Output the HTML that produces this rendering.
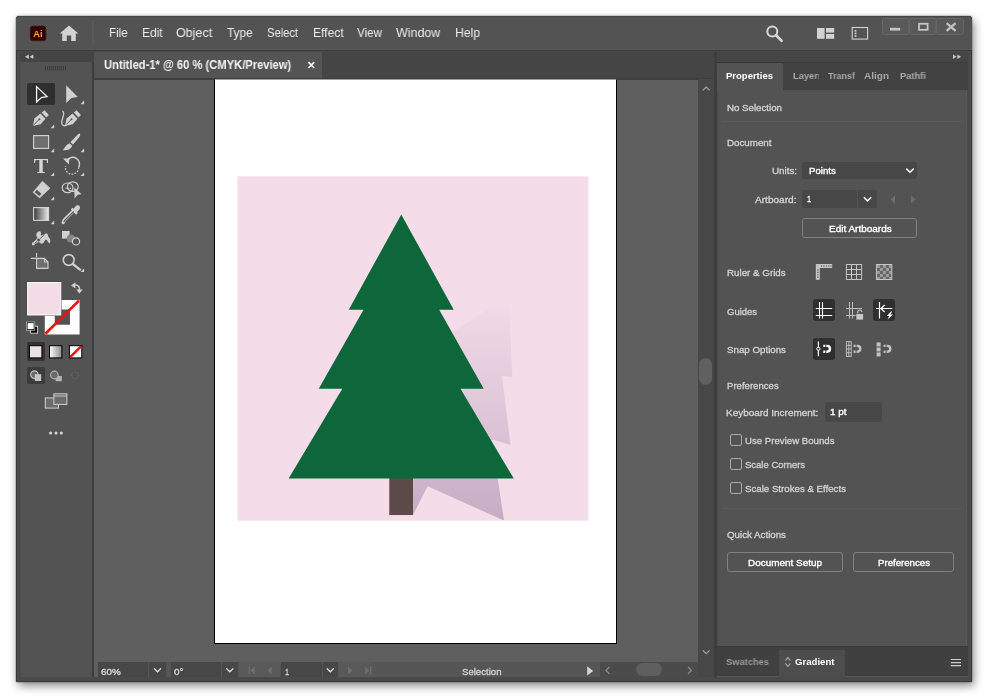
<!DOCTYPE html>
<html><head><meta charset="utf-8"><title>Illustrator</title>
<style>
*{box-sizing:border-box;margin:0;padding:0}
html,body{width:988px;height:698px;background:#fff;overflow:hidden}
body{font-family:"Liberation Sans","DejaVu Sans",sans-serif;position:relative}
.b{position:absolute}
.t{position:absolute;white-space:nowrap;line-height:1;transform-origin:0 0;display:block;will-change:transform}
.w{-webkit-text-stroke:0.35px #fff}
.p{-webkit-text-stroke:0.3px #d4d4d4}
#win{left:16px;top:16px;width:956px;height:666px;background:#4a4a4a;border:1px solid #3a3a3a;border-radius:3px 3px 0 0;box-shadow:2px 4px 10px rgba(0,0,0,.45),0 0 2px rgba(0,0,0,.55)}
#menubar{left:16px;top:16px;width:956px;height:34px;background:#535353;border-radius:3px 3px 0 0;border-top:1px solid #464646;border-bottom:1px solid #575757}
.fld{background:#474747;border-radius:2px}
.btn{border:1px solid #808080;border-radius:3px}
.cb{border:1px solid #a8a8a8;border-radius:2px;width:12px;height:12px}
.dk{background:#2f2f2f;border-radius:3px}
</style></head><body>
<div class="b" id="win"></div>
<div class="b" id="menubar"></div>
<!-- tools -->
<div class="b" style="left:17px;top:50px;width:954px;height:1.4px;background:#3a3a3a"></div>
<div class="b" style="left:20px;top:51.6px;width:74px;height:10.6px;background:#444"></div>
<div class="b" style="left:91.5px;top:62px;width:2.5px;height:615px;background:#3d3d3d"></div>
<div class="b" style="left:714px;top:51.6px;width:3px;height:626px;background:#3d3d3d"></div>
<div class="b" style="left:20px;top:62px;width:71.5px;height:615px;background:#535353;border-left:1px solid #4c4c4c"></div>
<!-- doc area -->
<div class="b" style="left:94px;top:51.6px;width:620px;height:27px;background:#454545"></div>
<div class="b" style="left:94px;top:51.8px;width:228px;height:25.8px;background:#545454"></div>
<div class="b" style="left:94px;top:77.5px;width:620px;height:2.1px;background:#3f3f3f"></div>
<div class="b" style="left:94px;top:79.6px;width:604px;height:582.4px;background:#5f5f5f"></div>
<div class="b" style="left:698px;top:79px;width:16px;height:583px;background:#474747"></div>
<div class="b" style="left:699px;top:358px;width:13px;height:27px;background:#606060;border-radius:7px"></div>
<!-- status -->
<div class="b" style="left:94px;top:662px;width:620px;height:15.4px;background:#565656"></div>
<div class="b" style="left:94px;top:662px;width:4px;height:15px;background:#5f5f5f"></div>
<div class="b" style="left:698px;top:662px;width:16px;height:15px;background:#474747"></div>
<div class="b fld" style="left:98px;top:662px;width:50px;height:15px;border-radius:0"></div>
<div class="b fld" style="left:149px;top:662px;width:17px;height:15px;border-radius:0"></div>
<div class="b fld" style="left:171px;top:662px;width:50px;height:15px;border-radius:0"></div>
<div class="b fld" style="left:222px;top:662px;width:16px;height:15px;border-radius:0"></div>
<div class="b fld" style="left:281px;top:662px;width:41px;height:15px;border-radius:0"></div>
<div class="b fld" style="left:323px;top:662px;width:15px;height:15px;border-radius:0"></div>
<div class="b" style="left:239px;top:662px;width:41px;height:15px;background:#595959"></div>
<div class="b" style="left:339px;top:662px;width:34px;height:15px;background:#595959"></div>
<div class="b" style="left:600px;top:662px;width:98px;height:15px;background:#4b4b4b"></div>
<div class="b" style="left:636px;top:663px;width:25.5px;height:13.4px;background:#5f5f5f;border-radius:7px"></div>
<!-- right panel -->
<div class="b" style="left:717px;top:51.6px;width:251px;height:10.6px;background:#454545"></div>
<div class="b" style="left:717px;top:62px;width:251px;height:27.7px;background:#424242;border-top:1px solid #3c3c3c"></div>
<div class="b" style="left:717px;top:62px;width:66px;height:27.7px;background:#535353;border-top:1px solid #353535"></div>
<div class="b" style="left:717px;top:89.7px;width:251px;height:556.3px;background:#535353;border-left:1px solid #4b4b4b;border-right:2px solid #4b4b4b"></div>
<div class="b" style="left:965.6px;top:89.7px;width:0.8px;height:556.3px;background:#5a5a5a"></div>
<div class="b" style="left:717px;top:646px;width:251px;height:31px;background:#404040;border-top:1px solid #3a3a3a;border-bottom:1px solid #575757"></div>
<div class="b" style="left:779px;top:650px;width:66px;height:27px;background:#4d4d4d"></div>
<!-- separators -->
<div class="b" style="left:722px;top:121px;width:240px;height:1px;background:#5a5a5a"></div>
<div class="b" style="left:722px;top:508px;width:240px;height:1px;background:#5a5a5a"></div>
<!-- fields -->
<div class="b fld" style="left:802px;top:162px;width:115px;height:17px"></div>
<div class="b fld" style="left:802px;top:190px;width:55px;height:18px;border-radius:2px 0 0 2px"></div>
<div class="b fld" style="left:858px;top:190px;width:19px;height:18px;border-radius:0 2px 2px 0"></div>
<div class="b btn" style="left:802px;top:218px;width:115px;height:20px"></div>
<div class="b dk" style="left:813px;top:299px;width:22px;height:22px"></div>
<div class="b dk" style="left:873px;top:299px;width:22px;height:22px"></div>
<div class="b dk" style="left:813px;top:338px;width:22px;height:22px"></div>
<div class="b fld" style="left:825px;top:402px;width:57px;height:20px"></div>
<div class="b cb" style="left:730px;top:434px"></div>
<div class="b cb" style="left:730px;top:458px"></div>
<div class="b cb" style="left:730px;top:482px"></div>
<div class="b btn" style="left:727px;top:552px;width:116px;height:20px"></div>
<div class="b btn" style="left:853px;top:552px;width:101px;height:20px"></div>
<!-- tool active bg -->
<div class="b dk" style="left:27px;top:83px;width:28px;height:22px;border-radius:2px"></div>
<div class="b dk" style="left:27px;top:342px;width:18px;height:19px;border-radius:2px;background:#333"></div>
<div class="b dk" style="left:27px;top:367px;width:18px;height:17px;border-radius:2px;background:#3b3b3b"></div>
<span class="t" style="left:108.90px;top:26px;font-size:13px;color:#ececec;transform:scaleX(0.8877);">File</span>
<span class="t" style="left:141.90px;top:26px;font-size:13px;color:#ececec;transform:scaleX(0.9194);">Edit</span>
<span class="t" style="left:176.40px;top:26px;font-size:13px;color:#ececec;transform:scaleX(0.9607);">Object</span>
<span class="t" style="left:226.90px;top:26px;font-size:13px;color:#ececec;transform:scaleX(0.9082);">Type</span>
<span class="t" style="left:266.90px;top:26px;font-size:13px;color:#ececec;transform:scaleX(0.8605);">Select</span>
<span class="t" style="left:312.65px;top:26px;font-size:13px;color:#ececec;transform:scaleX(0.9268);">Effect</span>
<span class="t" style="left:357.40px;top:26px;font-size:13px;color:#ececec;transform:scaleX(0.8979);">View</span>
<span class="t" style="left:396.40px;top:26px;font-size:13px;color:#ececec;transform:scaleX(0.9589);">Window</span>
<span class="t" style="left:454.90px;top:26px;font-size:13px;color:#ececec;transform:scaleX(0.9383);">Help</span>
<span class="t" style="left:103.60px;top:59px;font-size:12px;color:#f4f4f4;transform:scaleX(0.9310);font-weight:bold;">Untitled-1* @ 60 % (CMYK/Preview)</span>
<span class="t" style="left:726.40px;top:71px;font-size:9.5px;color:#ffffff;transform:scaleX(1.0000);font-weight:bold;">Properties</span>
<span class="t" style="left:792.50px;top:71px;font-size:9.5px;color:#a9a9a9;transform:scaleX(0.9791);font-weight:bold;width:26.86px;overflow:hidden">Layers</span>
<span class="t" style="left:828.00px;top:71px;font-size:9.5px;color:#a9a9a9;transform:scaleX(0.9469);font-weight:bold;width:28.51px;overflow:hidden">Transform</span>
<span class="t" style="left:864.00px;top:71px;font-size:9.5px;color:#a9a9a9;transform:scaleX(1.0526);font-weight:bold;">Align</span>
<span class="t" style="left:900.00px;top:71px;font-size:9.5px;color:#a9a9a9;transform:scaleX(0.9790);font-weight:bold;width:27.17px;overflow:hidden">Pathfinder</span>
<span class="t p" style="left:727.00px;top:103px;font-size:9.5px;color:#d4d4d4;transform:scaleX(1.0209);">No Selection</span>
<span class="t p" style="left:727.00px;top:138px;font-size:9.5px;color:#d4d4d4;transform:scaleX(1.0274);">Document</span>
<span class="t p" style="left:771.50px;top:166px;font-size:9.5px;color:#d4d4d4;transform:scaleX(1.0289);">Units:</span>
<span class="t w" style="left:809.00px;top:166px;font-size:9.5px;color:#ffffff;transform:scaleX(1.0111);">Points</span>
<span class="t p" style="left:755.00px;top:195px;font-size:9.5px;color:#d4d4d4;transform:scaleX(1.0620);">Artboard:</span>
<span class="t w" style="left:806.50px;top:194px;font-size:9.5px;color:#ffffff;transform:scaleX(0.7552);">1</span>
<span class="t w" style="left:828.50px;top:224px;font-size:9.5px;color:#ffffff;transform:scaleX(1.0507);">Edit Artboards</span>
<span class="t p" style="left:727.00px;top:268px;font-size:9.5px;color:#d4d4d4;transform:scaleX(1.0295);">Ruler &amp; Grids</span>
<span class="t p" style="left:727.00px;top:307px;font-size:9.5px;color:#d4d4d4;transform:scaleX(0.9964);">Guides</span>
<span class="t p" style="left:727.00px;top:345px;font-size:9.5px;color:#d4d4d4;transform:scaleX(1.0247);">Snap Options</span>
<span class="t p" style="left:727.00px;top:381px;font-size:9.5px;color:#d4d4d4;transform:scaleX(1.0091);">Preferences</span>
<span class="t p" style="left:725.70px;top:408px;font-size:9.5px;color:#d4d4d4;transform:scaleX(1.0466);">Keyboard Increment:</span>
<span class="t w" style="left:829.50px;top:407px;font-size:9.5px;color:#ffffff;transform:scaleX(1.0404);">1 pt</span>
<span class="t p" style="left:745.00px;top:436px;font-size:9.5px;color:#d4d4d4;transform:scaleX(1.0149);">Use Preview Bounds</span>
<span class="t p" style="left:745.00px;top:460px;font-size:9.5px;color:#d4d4d4;transform:scaleX(0.9966);">Scale Corners</span>
<span class="t p" style="left:745.00px;top:484px;font-size:9.5px;color:#d4d4d4;transform:scaleX(1.0192);">Scale Strokes &amp; Effects</span>
<span class="t p" style="left:727.00px;top:530px;font-size:9.5px;color:#d4d4d4;transform:scaleX(1.0250);">Quick Actions</span>
<span class="t w" style="left:748.00px;top:558px;font-size:9.5px;color:#ffffff;transform:scaleX(1.0457);">Document Setup</span>
<span class="t w" style="left:877.50px;top:558px;font-size:9.5px;color:#ffffff;transform:scaleX(1.0149);">Preferences</span>
<span class="t" style="left:726.00px;top:657px;font-size:9.5px;color:#9a9a9a;transform:scaleX(0.9811);font-weight:bold;">Swatches</span>
<span class="t" style="left:795.00px;top:657px;font-size:9.5px;color:#ffffff;transform:scaleX(1.0112);font-weight:bold;">Gradient</span>
<span class="t p" style="left:101.00px;top:667px;font-size:9.5px;color:#e8e8e8;transform:scaleX(1.0412);">60%</span>
<span class="t p" style="left:174.00px;top:667px;font-size:9.5px;color:#e8e8e8;transform:scaleX(1.0447);">0°</span>
<span class="t p" style="left:284.50px;top:667px;font-size:9.5px;color:#e8e8e8;transform:scaleX(0.7552);">1</span>
<span class="t p" style="left:461.50px;top:667px;font-size:9.5px;color:#d4d4d4;transform:scaleX(1.0104);">Selection</span>
<svg class="b" style="left:0;top:0" width="988" height="698" viewBox="0 0 988 698">
<defs>
<linearGradient id="sh" x1="0" y1="300" x2="0" y2="520" gradientUnits="userSpaceOnUse">
<stop offset="0" stop-color="#5a3c70" stop-opacity="0.0"/>
<stop offset="0.1" stop-color="#5a3c70" stop-opacity="0.04"/>
<stop offset="0.35" stop-color="#5a3c70" stop-opacity="0.10"/>
<stop offset="0.66" stop-color="#5a3c70" stop-opacity="0.175"/>
<stop offset="0.82" stop-color="#5a3c70" stop-opacity="0.25"/>
<stop offset="1" stop-color="#5a3c70" stop-opacity="0.30"/>
</linearGradient>
<linearGradient id="gr" x1="0" x2="1" y1="0" y2="0"><stop offset="0" stop-color="#3a3a3a"/><stop offset="1" stop-color="#ececec"/></linearGradient>
<linearGradient id="gr2" x1="0" x2="1" y1="0" y2="0"><stop offset="0" stop-color="#ffffff"/><stop offset="1" stop-color="#8a8a8a"/></linearGradient>
<clipPath id="cv"><rect x="94" y="79.6" width="604" height="582.4"/></clipPath>
<pattern id="chk" x="876.9" y="265" width="6" height="6" patternUnits="userSpaceOnUse"><rect width="6" height="6" fill="#666"/><rect width="3" height="3" fill="#9c9c9c"/><rect x="3" y="3" width="3" height="3" fill="#9c9c9c"/></pattern>
<path id="tri" d="M3.6,0 L3.6,3.6 L0,3.6 Z" fill="#cfcfcf"/>
<path id="mag" d="M0,0 H3.8 A2.9,2.9 0 0 1 3.8,5.8 H0" fill="none" stroke-width="2.4"/>
</defs>
<!-- artboard -->
<g clip-path="url(#cv)">
<rect x="214.5" y="70.5" width="402" height="573" fill="#fff" stroke="#000" stroke-width="1"/>
<rect x="237.5" y="176.3" width="351" height="344.3" fill="#f4dde9"/>
<path d="M502,300 L509,306 L512.3,377 L502,376 L510.5,445 L494,440 L440,440 L440,340 Z" fill="url(#sh)"/>
<path d="M413,478 L497.7,478 L504,520.6 L427.6,486.2 L413,515 Z" fill="url(#sh)"/>
<rect x="389.3" y="478" width="23.7" height="37" fill="#5b4a47"/>
<path d="M401.25,214.5 L453.75,309.7 L439.2,309.7 L483.75,388.7 L460.5,388.7 L513.8,478.6 L288.6,478.6 L342.3,388.7 L318.75,388.7 L363.5,309.7 L348.75,309.7 Z" fill="#0d673b"/>
</g>

<!-- ===== menubar ===== -->
<rect x="30.3" y="26" width="15.6" height="14.8" rx="2.6" fill="#330000" stroke="#4a1a10" stroke-width=".6"/>
<text x="38" y="37.3" font-family="'Liberation Sans',sans-serif" font-weight="bold" font-size="9.3" fill="#ffa51f" text-anchor="middle">Ai</text>
<path d="M69,25.5 L78.3,33.6 H75.8 V41 H71.2 V35.6 H66.8 V41 H62.2 V33.6 H59.7 Z" fill="#d2d2d2"/>
<rect x="92.4" y="22" width="1" height="22" fill="#5f5f5f"/>
<circle cx="772.3" cy="31.4" r="5" fill="none" stroke="#d8d8d8" stroke-width="2"/>
<path d="M776,35.3 L781.6,40.8" stroke="#d8d8d8" stroke-width="2.6" stroke-linecap="round"/>
<g fill="#d2d2d2"><rect x="817" y="28" width="7.6" height="10.8"/><rect x="826" y="28" width="8.2" height="4.6"/><rect x="826" y="34" width="8.2" height="4.8"/></g>
<rect x="852.2" y="27.5" width="15.4" height="11.6" fill="none" stroke="#d2d2d2" stroke-width="1.1"/>
<g fill="#d2d2d2"><rect x="854.6" y="30" width="1.8" height="1.6"/><rect x="854.6" y="32.6" width="1.8" height="1.6"/><rect x="854.6" y="35.2" width="1.8" height="1.6"/></g>
<!-- window controls -->
<g fill="#595959" stroke="#676767" stroke-width="1">
<rect x="882.5" y="18.5" width="26.5" height="16" rx="2"/><rect x="909.5" y="18.5" width="26.5" height="16" rx="2"/><rect x="936.5" y="18.5" width="27" height="16" rx="2"/>
</g>
<rect x="890" y="27.8" width="10.2" height="2.8" fill="#c4c4c4"/>
<rect x="919" y="23.8" width="8.6" height="6" fill="none" stroke="#c4c4c4" stroke-width="1.8"/>
<path d="M946.6,23.2 L955.6,30.8 M955.6,23.2 L946.6,30.8" stroke="#c4c4c4" stroke-width="2.2"/>

<!-- doc tab close -->
<path d="M308.4,62.2 L314.2,68 M314.2,62.2 L308.4,68" stroke="#f4f4f4" stroke-width="1.7"/>
<!-- scroll chevrons -->
<g fill="none" stroke="#a4a4a4" stroke-width="1.3">
<path d="M702.8,90.4 L706.2,87.1 L709.6,90.4"/>
<path d="M702.8,650.4 L706.2,653.7 L709.6,650.4"/>
<path d="M609.4,667 L606,670.4 L609.4,673.8" stroke="#8e8e8e" stroke-width="1.2"/>
<path d="M688,667 L691.4,670.4 L688,673.8" stroke="#8e8e8e" stroke-width="1.2"/>
</g>
<!-- status bar -->
<g fill="none" stroke="#e6e6e6" stroke-width="1.3">
<path d="M154,668.4 L157.5,671.8 L161,668.4"/>
<path d="M226.3,668.4 L229.8,671.8 L233.3,668.4"/>
<path d="M326.8,668.4 L330.3,671.8 L333.8,668.4"/>
</g>
<g fill="#6f6f6f">
<rect x="248.6" y="666.5" width="1.2" height="8"/><path d="M254.6,666.5 V674.5 L250.4,670.5 Z"/>
<path d="M271.6,666.5 V674.5 L267.4,670.5 Z"/>
<path d="M348,666.5 V674.5 L352.2,670.5 Z"/>
<path d="M365.2,666.5 V674.5 L369.4,670.5 Z"/><rect x="370" y="666.5" width="1.2" height="8"/>
</g>
<path d="M587.2,666.3 V675.5 L593.2,670.9 Z" fill="#d6d6d6"/>

<!-- ===== tools ===== -->
<g fill="#c8c8c8"><path d="M28.8,54.4 V59 L25,56.7 Z"/><path d="M33.4,54.4 V59 L29.6,56.7 Z"/></g>
<g fill="#3b3b3b">
<rect x="45" y="66" width="1" height="4.4"/><rect x="47" y="66" width="1" height="4.4"/><rect x="49" y="66" width="1" height="4.4"/><rect x="51" y="66" width="1" height="4.4"/><rect x="53" y="66" width="1" height="4.4"/><rect x="55" y="66" width="1" height="4.4"/><rect x="57" y="66" width="1" height="4.4"/><rect x="59" y="66" width="1" height="4.4"/><rect x="61" y="66" width="1" height="4.4"/><rect x="63" y="66" width="1" height="4.4"/><rect x="65" y="66" width="1" height="4.4"/>
</g>
<!-- selection -->
<path d="M36.6,86.6 L47,96.6 L41.4,97.6 L36.6,102 Z" fill="none" stroke="#f4f4f4" stroke-width="1.3" stroke-linejoin="miter"/>
<path d="M66.2,85.2 L77.8,96.9 L71.4,98 L66.2,103 Z" fill="#cfcfcf"/>
<use href="#tri" x="80.5" y="100.6"/>
<!-- pen -->
<g transform="translate(32.5,110)" fill="#d0d0d0">
<path d="M9.2,2.6 L11.9,0.2 L16.4,5.1 L13.8,7.6 Z"/>
<path d="M7.9,3.6 L12.9,8.7 L8.2,14.3 L0.4,15.9 L1.9,8.6 Z"/>
<path d="M0.6,15.7 L6.4,9.7" stroke="#535353" stroke-width="0.9"/><circle cx="6.9" cy="9.2" r="1" fill="#535353"/>
</g>
<use href="#tri" x="50.6" y="124.6"/>
<!-- curvature -->
<g transform="translate(64.6,110)" fill="#d0d0d0">
<path d="M9.2,2.6 L11.9,0.2 L16.4,5.1 L13.8,7.6 Z"/>
<path d="M7.9,3.6 L12.9,8.7 L8.2,14.3 L0.4,15.9 L1.9,8.6 Z"/>
<path d="M0.6,15.7 L6.4,9.7" stroke="#535353" stroke-width="0.9"/><circle cx="6.9" cy="9.2" r="1" fill="#535353"/>
</g>
<path d="M62.4,111 C66.5,113.5 60.5,119.5 61.8,123.6 C62.6,126.4 65.6,126.3 66.6,124.4" fill="none" stroke="#d0d0d0" stroke-width="1.3"/>
<!-- rectangle -->
<rect x="33.6" y="135.6" width="15" height="12.8" fill="#6f6f6f" stroke="#d6d6d6" stroke-width="1.1"/>
<use href="#tri" x="50.6" y="148.6"/>
<!-- brush -->
<g fill="#d0d0d0">
<path d="M79.9,133.6 C80.6,135 80,136.4 79,137.6 L73,144.6 L70.4,142.2 L76.8,135.4 C77.8,134.3 78.8,133.7 79.9,133.6 Z"/>
<path d="M69.6,143.2 L72.2,145.7 C71.4,149.4 66.4,150.8 62.4,150.2 C65.2,148.4 65.4,144.6 69.6,143.2 Z"/>
</g>
<use href="#tri" x="80.5" y="148.6"/>
<!-- type -->
<text x="41" y="172.9" font-family="'Liberation Serif',serif" font-weight="bold" font-size="20.5" fill="#d6d6d6" text-anchor="middle" textLength="14.6" lengthAdjust="spacingAndGlyphs">T</text>
<use href="#tri" x="50.6" y="172.4"/>
<!-- rotate -->
<path d="M67.2,160.6 A6.6,6.6 0 0 1 78.6,167.4" fill="none" stroke="#d0d0d0" stroke-width="1.5"/>
<path d="M78.6,167.4 A6.6,6.6 0 1 1 65.6,166" fill="none" stroke="#d0d0d0" stroke-width="1.3" stroke-dasharray="1.6 1.5"/>
<path d="M63,158.4 L69.4,158.6 L68.8,164.4 Z" fill="#d0d0d0"/>
<use href="#tri" x="80.5" y="172.4"/>
<!-- eraser -->
<path d="M42.4,181.2 L50.1,188.2 L39.6,197.9 L33,192.3 Z" fill="#d0d0d0" stroke="#d0d0d0" stroke-width=".6" stroke-linejoin="round"/>
<path d="M34.7,192.2 L36.8,189.7 L41.4,193.7 L39.4,196.1 Z" fill="#535353"/>
<use href="#tri" x="50.6" y="196.6"/>
<!-- shape builder -->
<ellipse cx="67.6" cy="187.8" rx="5.4" ry="4.8" fill="none" stroke="#d0d0d0" stroke-width="1.2"/>
<ellipse cx="72.8" cy="186.6" rx="5.4" ry="4.8" fill="none" stroke="#d0d0d0" stroke-width="1.2"/>
<g fill="#d0d0d0"><circle cx="66" cy="188.2" r=".7"/><circle cx="68.2" cy="188.2" r=".7"/><circle cx="70.4" cy="188.2" r=".7"/></g>
<path d="M74.2,187.6 L81.6,194.2 L77.6,194.8 L74.6,198.6 Z" fill="#d0d0d0"/>
<!-- gradient -->
<rect x="33.6" y="207.6" width="15" height="12.8" fill="url(#gr)" stroke="#d6d6d6" stroke-width="1.1"/>
<use href="#tri" x="50.6" y="220.6"/>
<!-- eyedropper -->
<path d="M76.4,205.6 C78.8,204.6 80.8,206.6 79.8,209 L77,212 L77.9,213 L76.2,214.8 L70.8,209.4 L72.4,207.8 L73.4,208.7 Z" fill="#d0d0d0"/>
<path d="M73,211.4 L64.4,220 L63.2,222.4" fill="none" stroke="#d0d0d0" stroke-width="3.4" stroke-linecap="round" stroke-linejoin="round"/>
<path d="M73.4,211.8 L65,220.2 L64,221.6" fill="none" stroke="#535353" stroke-width="1.2" stroke-linecap="round"/>
<!-- puppet/warp -->
<path d="M33,243.6 C33.6,240 36.6,240.6 37.4,237.4 C35.6,235.6 36.2,232 38.8,231.4 C40.8,231 41.6,233.4 40.6,235 C42.6,236.6 44.4,233 46.6,233.6 C48.6,234.2 47.6,237 49.6,238.2 C50.6,240 50.4,242.8 49.4,243.6 C47.8,242.6 47.6,240 46,239.6 C44.4,239.8 44.6,243 42.4,243.6 C40.4,244 39.8,241.8 38.4,242 C36.4,242.6 35.6,245 33,243.6 Z" fill="#d0d0d0"/>
<path d="M33.4,244.6 L44.6,234.6" stroke="#535353" stroke-width=".9"/><circle cx="38.6" cy="240" r="1.9" fill="#535353" stroke="#d0d0d0" stroke-width=".8"/>
<rect x="32" y="242.6" width="2.6" height="2.6" fill="#d0d0d0"/>
<!-- blend -->
<rect x="62" y="231" width="7.6" height="7.6" fill="#d0d0d0"/>
<circle cx="70.8" cy="238.6" r="4" fill="#858585"/>
<circle cx="76" cy="241.4" r="3.6" fill="#535353" stroke="#d6d6d6" stroke-width="1.2"/>
<!-- artboard -->
<path d="M36.6,258.4 H44.4 L48,262 V268.4 H36.6 Z" fill="#6f6f6f" stroke="#d0d0d0" stroke-width="1.1"/>
<path d="M44.4,258.4 V262 H48" fill="none" stroke="#d0d0d0" stroke-width="1"/>
<path d="M36.6,253 V257.6 M30.8,258.4 H35.8" stroke="#d0d0d0" stroke-width="1.1"/>
<!-- zoom -->
<circle cx="68.7" cy="260" r="5.4" fill="none" stroke="#d0d0d0" stroke-width="1.6"/>
<path d="M72.8,264 L80,269.6" stroke="#d0d0d0" stroke-width="2.4" stroke-linecap="round"/>
<use href="#tri" x="80.5" y="268.4"/>
<!-- stroke swatch -->
<path d="M44.8,300 H79.6 V334.4 H44.8 Z M54.8,309.4 V324.8 H70 V309.4 Z" fill="#fff" fill-rule="evenodd"/>
<path d="M45.4,333.8 L79,300.6" stroke="#ee1111" stroke-width="2.7"/>
<!-- fill swatch -->
<rect x="26.8" y="281.7" width="34.8" height="34.1" fill="#3c3c3c"/>
<rect x="27.6" y="282.5" width="33.2" height="32.5" fill="#f5dde8" stroke="#fff" stroke-width="1"/>
<!-- swap -->
<path d="M74.4,285.2 C78.6,284.6 80,287.6 79.4,290.4" fill="none" stroke="#d0d0d0" stroke-width="1.5"/>
<path d="M71,285.6 L75.4,282.2 V288.6 Z M76.2,289.4 H82.8 L79.4,293.4 Z" fill="#d0d0d0"/>
<!-- default colors -->
<rect x="30.6" y="326.2" width="7" height="7" fill="#000" stroke="#d8d8d8" stroke-width=".9"/>
<rect x="27" y="322.6" width="7.2" height="7.2" fill="#fff" stroke="#000" stroke-width="1"/>
<rect x="26.4" y="322" width="8.4" height="8.4" fill="none" stroke="#d8d8d8" stroke-width=".6"/>
<!-- color mode buttons -->
<rect x="29.5" y="345.7" width="12.4" height="12.2" fill="#eae1e6" stroke="#000" stroke-width="1"/>
<rect x="49.5" y="345.7" width="12.4" height="12.2" fill="url(#gr2)" stroke="#000" stroke-width="1"/>
<rect x="69.4" y="345.7" width="12.4" height="12.2" fill="#fff" stroke="#000" stroke-width="1"/>
<path d="M70.2,357.2 L81,346.4" stroke="#ee1111" stroke-width="2.4"/>
<!-- draw modes -->
<circle cx="34.4" cy="374.6" r="3.7" fill="#6a6a6a" stroke="#c4c4c4" stroke-width="1.2"/>
<rect x="34.8" y="374.2" width="6.4" height="6.8" fill="#c6c6c6"/>
<rect x="55.6" y="376" width="6.2" height="5.2" fill="#b4b4b4"/>
<circle cx="54.4" cy="375" r="3.8" fill="#6a6a6a" stroke="#b0b0b0" stroke-width="1.2"/>
<circle cx="75" cy="375.4" r="3.5" fill="none" stroke="#646464" stroke-width="1.2" stroke-dasharray="1.5 1"/>
<!-- screen mode -->
<rect x="45.3" y="397.9" width="13.2" height="10.2" fill="#6c6c6c" stroke="#d0d0d0" stroke-width="1"/>
<rect x="53.9" y="393.8" width="13" height="10.6" fill="#6c6c6c" stroke="#d0d0d0" stroke-width="1"/>
<path d="M53.9,396 H66.9" stroke="#d0d0d0" stroke-width=".9"/>
<g fill="#d8d8d8"><circle cx="50.6" cy="433" r="1.5"/><circle cx="56" cy="433" r="1.5"/><circle cx="61.3" cy="433" r="1.5"/></g>

<!-- ===== right panel ===== -->
<g fill="#c8c8c8"><path d="M953,54.4 V59 L956.6,56.7 Z"/><path d="M957.4,54.4 V59 L961,56.7 Z"/></g>
<g fill="none" stroke="#f4f4f4" stroke-width="1.6">
<path d="M906.3,168.6 L910,172.2 L913.7,168.6"/>
<path d="M863.8,197.2 L867.5,200.8 L871.2,197.2"/>
</g>
<g fill="#6e6e6e"><path d="M895,195.6 V203.6 L890.6,199.6 Z"/><path d="M911,195.6 V203.6 L915.4,199.6 Z"/></g>
<!-- ruler -->
<path d="M815.8,264 H832.2 V268 H819.8 V279.8 H815.8 Z" fill="#c6c6c6"/>
<g fill="#535353"><rect x="821" y="265.4" width="1.1" height="1.3"/><rect x="823.4" y="265.4" width="1.1" height="1.3"/><rect x="825.8" y="265.4" width="1.1" height="1.3"/><rect x="828.2" y="265.4" width="1.1" height="1.3"/><rect x="830.4" y="265.4" width="1.1" height="1.3"/><rect x="817.2" y="269.4" width="1.3" height="1.1"/><rect x="817.2" y="271.8" width="1.3" height="1.1"/><rect x="817.2" y="274.2" width="1.3" height="1.1"/><rect x="817.2" y="276.6" width="1.3" height="1.1"/></g>
<!-- grid -->
<g fill="none" stroke="#c6c6c6" stroke-width="1"><rect x="846.4" y="264.5" width="15.2" height="15"/><path d="M851.5,264.5 V279.5 M856.5,264.5 V279.5 M846.4,269.5 H861.6 M846.4,274.5 H861.6"/></g>
<!-- transparency grid -->
<rect x="876.4" y="264.5" width="15.4" height="15" fill="url(#chk)" stroke="#c6c6c6" stroke-width="1"/>
<!-- guides 1 -->
<path d="M819.5,302 V318.6 M822.5,302 V318.6 M815.8,308.5 H832.2 M815.8,315.5 H832.2" stroke="#fff" stroke-width="1.1" fill="none"/>
<!-- guides 2 lock -->
<path d="M849.5,302 V318.6 M852.5,302 V318.6 M846,308.5 H862 M846,315.5 H855.6" stroke="#bdbdbd" stroke-width="1" fill="none"/>
<rect x="856.3" y="314" width="6.8" height="5.6" fill="#c8c8c8"/>
<path d="M857.8,313.6 V312 A2,2 0 0 1 861.8,312" fill="none" stroke="#c8c8c8" stroke-width="1.1"/>
<!-- guides 3 smart -->
<path d="M879.5,302 V318.6 M876,308.5 H892.4 M884.6,305 L881,308.5 L884.6,312" stroke="#fff" stroke-width="1.2" fill="none"/>
<path d="M891,311.4 L886.8,316 H889.2 L887.6,319.6 L893,314.4 H890.4 L892.2,311.4 Z" fill="#fff"/>
<!-- snap 1 -->
<path d="M818.4,341.4 V356.2" stroke="#fff" stroke-width="1.2"/>
<circle cx="818.4" cy="348.8" r="1.6" fill="#2f2f2f" stroke="#fff" stroke-width="1"/>
<use href="#mag" x="823.3" y="345.9" stroke="#fff"/>
<path d="M825.8,344.4 V353.4" stroke="#2f2f2f" stroke-width="1"/>
<!-- snap 2 -->
<g fill="none" stroke="#c2c2c2" stroke-width=".9"><rect x="846.4" y="341.6" width="4.8" height="14.8"/><path d="M848.8,341.6 V356.4 M846.4,345.3 H851.2 M846.4,349 H851.2 M846.4,352.7 H851.2"/></g>
<use href="#mag" x="853.6" y="345.9" stroke="#c2c2c2"/>
<path d="M856.1,344.4 V353.4" stroke="#535353" stroke-width="1"/>
<!-- snap 3 -->
<g fill="#c2c2c2"><rect x="876.6" y="342.4" width="4" height="4"/><rect x="876.6" y="347.4" width="4" height="4"/><rect x="876.6" y="352.4" width="4" height="4"/></g>
<use href="#mag" x="883.6" y="345.9" stroke="#c2c2c2"/>
<path d="M886.1,344.4 V353.4" stroke="#535353" stroke-width="1"/>
<!-- bottom tabs -->
<g fill="none" stroke="#a8a8a8" stroke-width="1.1"><path d="M785.4,660.6 L787.9,657.6 L790.4,660.6"/><path d="M785.4,663.4 L787.9,666.4 L790.4,663.4"/></g>
<path d="M950.8,659.5 H961 M950.8,662.6 H961 M950.8,665.7 H961" stroke="#cdcdcd" stroke-width="1.2"/>
</svg>

</body></html>
